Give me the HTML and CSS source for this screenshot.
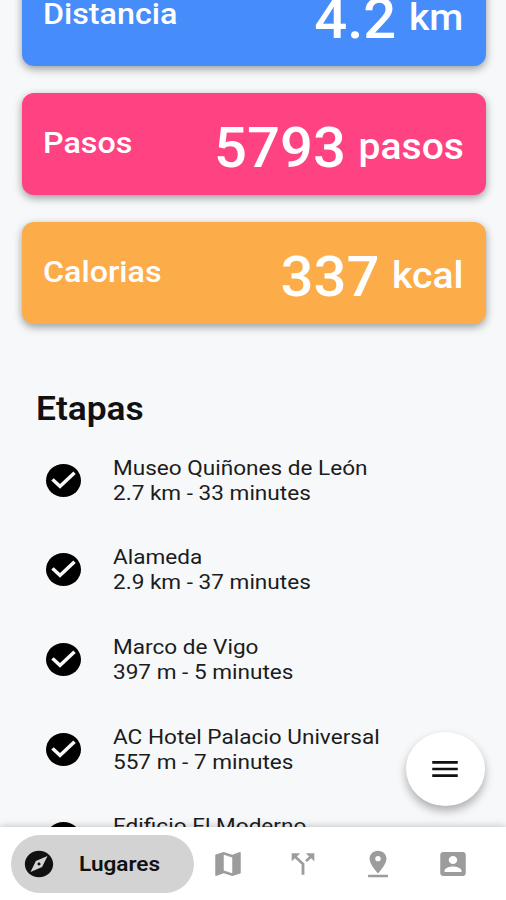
FILE: index.html
```html
<!DOCTYPE html>
<html lang="es">
<head>
    <meta charset="UTF-8">
    <meta name="viewport" content="width=device-width, initial-scale=1.0">
    <title>Lugares</title>
    <link rel="stylesheet" href="styles.css">
</head>
<body>
    <main class="content">
        <section class="cards">
            <div class="card distance">
                <span class="label">Distancia</span>
                <span class="value">4.2 <small>km</small></span>
            </div>
            <div class="card steps">
                <span class="label">Pasos</span>
                <span class="value">5793 <small>pasos</small></span>
            </div>
            <div class="card calories">
                <span class="label">Calorias</span>
                <span class="value">337 <small>kcal</small></span>
            </div>
        </section>
        <h2 class="title">Etapas</h2>
        <ul class="stages">
            <li class="stage">
                <svg class="check"><use href="#check"/></svg>
                <p class="stage-text">Museo Quiñones de León<br>2.7 km - 33 minutes</p>
            </li>
            <li class="stage">
                <svg class="check"><use href="#check"/></svg>
                <p class="stage-text">Alameda<br>2.9 km - 37 minutes</p>
            </li>
            <li class="stage">
                <svg class="check"><use href="#check"/></svg>
                <p class="stage-text">Marco de Vigo<br>397 m - 5 minutes</p>
            </li>
            <li class="stage">
                <svg class="check"><use href="#check"/></svg>
                <p class="stage-text">AC Hotel Palacio Universal<br>557 m - 7 minutes</p>
            </li>
            <li class="stage">
                <svg class="check"><use href="#check"/></svg>
                <p class="stage-text">Edificio El Moderno</p>
            </li>
        </ul>
    </main>
    <button class="fab" aria-label="Menu">
        <svg class="icon" viewBox="0 0 24 24" preserveAspectRatio="none"><path d="M3 18h18v-2H3v2zm0-5h18v-2H3v2zm0-7v2h18V6H3z"/></svg>
    </button>
    <nav class="nav">
        <a class="nav-item active">
            <svg class="icon" viewBox="0 0 24 24" preserveAspectRatio="none"><path d="M12 10.9c-.61 0-1.1.49-1.1 1.1s.49 1.1 1.1 1.1c.61 0 1.1-.49 1.1-1.1s-.49-1.1-1.1-1.1zM12 2C6.48 2 2 6.48 2 12s4.48 10 10 10 10-4.48 10-10S17.52 2 12 2zm2.19 12.19L6 18l3.81-8.19L18 6l-3.81 8.19z"/></svg>
            <span class="nav-text">Lugares</span>
        </a>
        <a class="nav-item">
            <svg class="icon" viewBox="0 0 24 24" preserveAspectRatio="none"><path d="M20.5 3l-.16.03L15 5.1 9 3 3.36 4.9c-.21.07-.36.25-.36.48V20.5c0 .28.22.5.5.5l.16-.03L9 18.9l6 2.1 5.64-1.9c.21-.07.36-.25.36-.48V3.5c0-.28-.22-.5-.5-.5zM15 19l-6-2.11V5l6 2.11V19z"/></svg>
        </a>
        <a class="nav-item">
            <svg class="icon" viewBox="0 0 24 24" preserveAspectRatio="none"><path d="M14 4l2.29 2.29-2.88 2.88 1.42 1.42 2.88-2.88L20 10V4zm-4 0H4v6l2.29-2.29 4.71 4.7V20h2v-8.41l-5.29-5.3z"/></svg>
        </a>
        <a class="nav-item">
            <svg class="icon" viewBox="0 0 24 24" preserveAspectRatio="none"><path d="M18 8c0-3.31-2.69-6-6-6S6 4.69 6 8c0 4.5 6 11 6 11s6-6.5 6-11zm-8 0c0-1.1.9-2 2-2s2 .9 2 2-.89 2-2 2c-1.1 0-2-.9-2-2zM5 20v2h14v-2H5z"/></svg>
        </a>
        <a class="nav-item">
            <svg class="icon" viewBox="0 0 24 24" preserveAspectRatio="none"><path d="M3 5v14c0 1.1.89 2 2 2h14c1.1 0 2-.9 2-2V5c0-1.1-.9-2-2-2H5c-1.11 0-2 .9-2 2zm12 4c0 1.66-1.34 3-3 3s-3-1.34-3-3 1.34-3 3-3 3 1.34 3 3zm-9 8c0-2 4-3.1 6-3.1s6 1.1 6 3.1v1H6v-1z"/></svg>
        </a>
    </nav>
    <svg class="defs">
        <symbol id="check" viewBox="2 2 20 20" preserveAspectRatio="none">
            <circle cx="12" cy="12" r="10"/>
            <path class="tick" d="M10 17l-5-5 1.41-1.41L10 14.17l7.59-7.59L19 8l-9 9z"/>
        </symbol>
    </svg>
</body>
</html>
```
FILE: styles.css
```css
* {
    box-sizing: border-box;
}
html {
    height: 100%;
    font-family: Roboto, "Liberation Sans", sans-serif;
}
body {
    display: flex;
    flex-direction: column;
    height: 100%;
    margin: 0;
    overflow: hidden;
    background-color: #f7f8fa;
    color: #111;
}
.content {
    flex: 1;
    min-height: 0;
    overflow: hidden;
}
.cards {
    display: flex;
    flex-direction: column;
    gap: 27px;
    margin: -36.5px 20.5px 0 21.5px;
}
.card {
    display: flex;
    justify-content: space-between;
    align-items: center;
    height: 102px;
    padding: 0 22px 0 21px;
    border-radius: 12px;
    box-shadow: 0 3px 9px rgba(0, 0, 0, 0.38);
    color: white;
    font-weight: 500;
}
.distance {
    background-color: #468dfb;
}
.steps {
    background-color: #ff4281;
}
.calories {
    background-color: #fdac4a;
}
.label {
    padding-bottom: 3px;
    font-size: 30px;
    transform: scaleX(1.075);
    transform-origin: left;
}
.value {
    display: flex;
    align-items: center;
    gap: 12px;
    padding-top: 8px;
    font-size: 55px;
    transform: scaleX(1.055);
    transform-origin: right;
}
.value small {
    padding-bottom: 2px;
    font-size: 37px;
}
.title {
    margin: 65px 0 0 36px;
    font-size: 33px;
    font-weight: 600;
    line-height: 40px;
    transform: scaleX(1.07);
    transform-origin: left;
}
.stages {
    margin: 27.4px 0 0;
    padding: 0 0 0 46px;
    list-style: none;
}
.stage {
    display: flex;
    align-items: flex-start;
    height: 89.6px;
}
.check {
    width: 35px;
    height: 33px;
    margin: 8px 32px 0 0;
}
.tick {
    fill: #f7f8fa;
}
.stage-text {
    margin: 0;
    font-size: 21px;
    line-height: 25px;
    color: #1c1c1c;
    transform: scaleX(1.075);
    transform-origin: left;
}
.fab {
    position: absolute;
    right: 21.5px;
    bottom: 94.5px;
    display: flex;
    justify-content: center;
    align-items: center;
    width: 79px;
    height: 74px;
    padding: 0;
    border: none;
    border-radius: 50%;
    background-color: white;
    box-shadow: 0 5px 10px rgba(0, 0, 0, 0.3);
}
.icon {
    width: 34px;
    height: 32px;
    fill: #111;
}
.nav {
    position: relative;
    display: flex;
    align-items: center;
    height: 73px;
    padding: 0 15px 0 11px;
    background-color: white;
    box-shadow: 0 0 8px rgba(0, 0, 0, 0.25);
}
.nav-item {
    display: flex;
    justify-content: center;
    width: 75.3px;
}
.nav-item .icon {
    fill: #9c9c9c;
}
.nav-item.active {
    justify-content: flex-start;
    align-items: center;
    width: 183px;
    height: 58px;
    margin-right: -4px;
    padding-left: 11px;
    border-radius: 29px;
    background-color: #d3d3d3;
}
.nav-item.active .icon {
    fill: #111;
}
.nav-text {
    margin-left: 23px;
    font-size: 21px;
    font-weight: 600;
    transform: scaleX(1.075);
    transform-origin: left;
}
.defs {
    display: none;
}
```
